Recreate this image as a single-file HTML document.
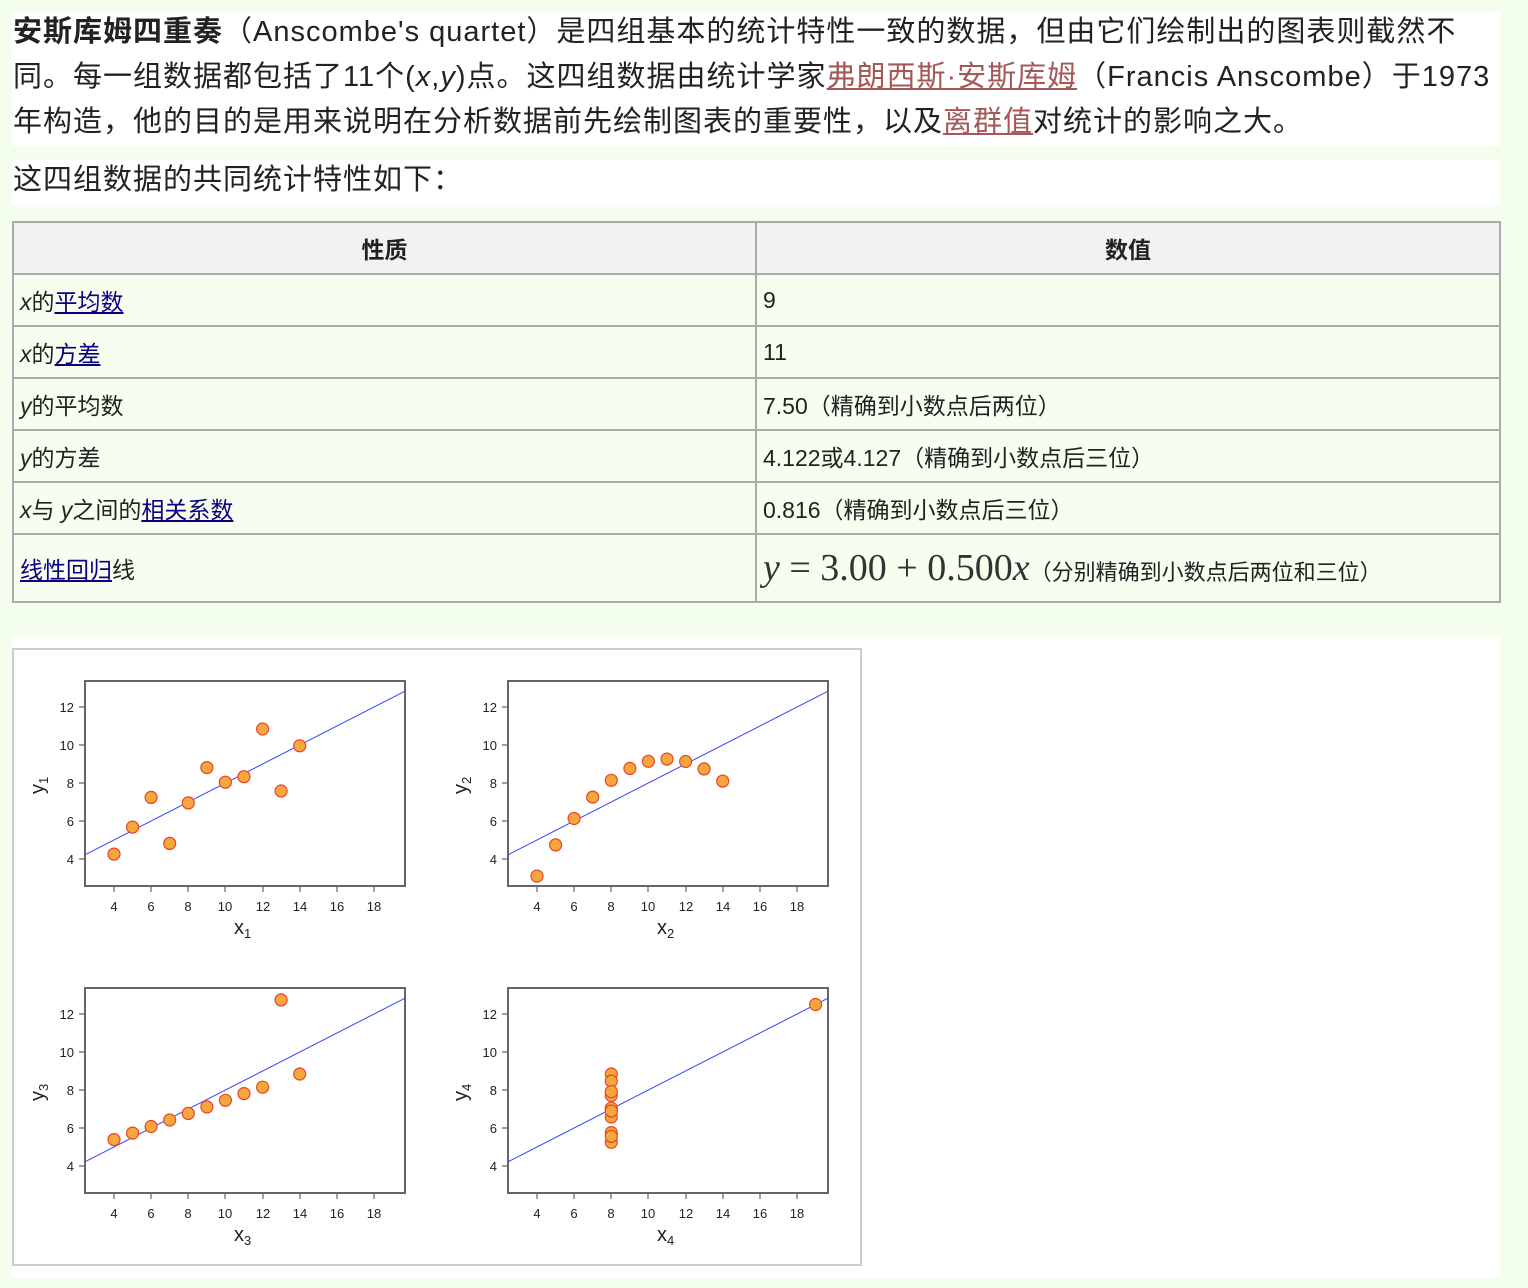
<!DOCTYPE html>
<html><head><meta charset="utf-8">
<style>
html,body{margin:0;padding:0;}
body{width:1528px;height:1288px;background:#f3feed;position:relative;overflow:hidden;font-family:"Liberation Sans","Noto Sans CJK SC",sans-serif;color:#222;}
.box{position:absolute;background:#fff;}
.p1{left:12px;top:12px;width:1488px;height:134px;}
.p1 div{position:absolute;left:1px;font-size:29px;letter-spacing:1px;white-space:nowrap;line-height:45px;}
.p2{left:12px;top:160px;width:1488px;height:45px;}
a.v{color:#a55858;text-decoration:underline;}
a.b{color:#0b0080;text-decoration:underline;}
table{position:absolute;left:12px;top:221px;width:1489px;border-collapse:collapse;background:#f5feef;font-size:23px;}
td,th{border:2px solid #aaa;padding:0 6px;text-align:left;white-space:nowrap;}
th{background:#f2f2f2;text-align:center;font-weight:bold;height:50px;}
td{height:50px;}
.fig{left:12px;top:637px;width:1488px;height:641px;}
.inner{position:absolute;left:12px;top:648px;width:846px;height:614px;border:2px solid #ccc;background:#fff;}
</style></head><body>
<div class="box p1">
<div style="top:-2px">
<b>安斯库姆四重奏</b>（Anscombe's quartet）是四组基本的统计特性一致的数据，但由它们绘制出的图表则截然不</div>
<div style="top:43px">同。每一组数据都包括了11个(<i>x</i>,<i>y</i>)点。这四组数据由统计学家<a class="v">弗朗西斯·安斯库姆</a>（Francis Anscombe）于1973</div>
<div style="top:88px">年构造，他的目的是用来说明在分析数据前先绘制图表的重要性，以及<a class="v">离群值</a>对统计的影响之大。</div>
</div>
<div class="box p2"><div style="position:absolute;left:1px;top:-2px;font-size:29px;letter-spacing:1px;line-height:45px;">这四组数据的共同统计特性如下：</div></div>
<table>
<tr><th style="width:729px">性质</th><th>数值</th></tr>
<tr><td><i>x</i>的<a class="b">平均数</a></td><td>9</td></tr>
<tr><td><i>x</i>的<a class="b">方差</a></td><td>11</td></tr>
<tr><td><i>y</i>的平均数</td><td>7.50（精确到小数点后两位）</td></tr>
<tr><td><i>y</i>的方差</td><td>4.122或4.127（精确到小数点后三位）</td></tr>
<tr><td><i>x</i>与 <i>y</i>之间的<a class="b">相关系数</a></td><td>0.816（精确到小数点后三位）</td></tr>
<tr><td style="height:66px"><a class="b">线性回归</a>线</td><td style="height:66px"><span style="font-family:'Liberation Serif',serif;font-size:38px;color:#333"><i>y</i> = 3.00 + 0.500<i>x</i></span><span style="font-size:22px">（分别精确到小数点后两位和三位）</span></td></tr>
</table>
<div class="box fig"></div>
<div class="inner"></div>
<svg style="position:absolute;left:0;top:0" width="1528" height="1288" font-family="Liberation Sans,sans-serif">
<defs>
<g id="ax">
<rect x="85" y="681" width="320" height="205" fill="none" stroke="#666" stroke-width="2"/>
<g stroke="#666" stroke-width="1.2">
<path d="M79 707H85M79 745H85M79 783H85M79 821H85M79 859H85"/>
<path d="M114 886V892M151 886V892M188 886V892M225 886V892M263 886V892M300 886V892M337 886V892M374 886V892"/>
</g>
<line x1="85" y1="854.8" x2="405" y2="691.2" stroke="#3344ff" stroke-width="1"/>
</g>
</defs>
<use href="#ax"/><use href="#ax" x="423"/><use href="#ax" y="307"/><use href="#ax" x="423" y="307"/>
<g font-size="13" fill="#222" text-anchor="end">
<text x="74" y="712">12</text><text x="74" y="750">10</text><text x="74" y="788">8</text><text x="74" y="826">6</text><text x="74" y="864">4</text>
<text x="497" y="712">12</text><text x="497" y="750">10</text><text x="497" y="788">8</text><text x="497" y="826">6</text><text x="497" y="864">4</text>
<text x="74" y="1019">12</text><text x="74" y="1057">10</text><text x="74" y="1095">8</text><text x="74" y="1133">6</text><text x="74" y="1171">4</text>
<text x="497" y="1019">12</text><text x="497" y="1057">10</text><text x="497" y="1095">8</text><text x="497" y="1133">6</text><text x="497" y="1171">4</text>
</g>
<g font-size="13" fill="#222" text-anchor="middle">
<text x="114" y="911">4</text><text x="151" y="911">6</text><text x="188" y="911">8</text><text x="225" y="911">10</text><text x="263" y="911">12</text><text x="300" y="911">14</text><text x="337" y="911">16</text><text x="374" y="911">18</text>
<text x="537" y="911">4</text><text x="574" y="911">6</text><text x="611" y="911">8</text><text x="648" y="911">10</text><text x="686" y="911">12</text><text x="723" y="911">14</text><text x="760" y="911">16</text><text x="797" y="911">18</text>
<text x="114" y="1218">4</text><text x="151" y="1218">6</text><text x="188" y="1218">8</text><text x="225" y="1218">10</text><text x="263" y="1218">12</text><text x="300" y="1218">14</text><text x="337" y="1218">16</text><text x="374" y="1218">18</text>
<text x="537" y="1218">4</text><text x="574" y="1218">6</text><text x="611" y="1218">8</text><text x="648" y="1218">10</text><text x="686" y="1218">12</text><text x="723" y="1218">14</text><text x="760" y="1218">16</text><text x="797" y="1218">18</text>
</g>
<g font-size="20" fill="#222">
<text x="234" y="934">x<tspan font-size="13" dy="4">1</tspan></text>
<text x="657" y="934">x<tspan font-size="13" dy="4">2</tspan></text>
<text x="234" y="1241">x<tspan font-size="13" dy="4">3</tspan></text>
<text x="657" y="1241">x<tspan font-size="13" dy="4">4</tspan></text>
<text transform="translate(44,794) rotate(-90)">y<tspan font-size="13" dy="4">1</tspan></text>
<text transform="translate(467,794) rotate(-90)">y<tspan font-size="13" dy="4">2</tspan></text>
<text transform="translate(44,1101) rotate(-90)">y<tspan font-size="13" dy="4">3</tspan></text>
<text transform="translate(467,1101) rotate(-90)">y<tspan font-size="13" dy="4">4</tspan></text>
</g>
<g fill="#f5a63c" stroke="#e8452a" stroke-width="1.2">
<circle cx="225.4" cy="782.2" r="6"/><circle cx="188.3" cy="802.9" r="6"/><circle cx="281.1" cy="791" r="6"/><circle cx="206.9" cy="767.6" r="6"/><circle cx="244" cy="776.7" r="6"/><circle cx="299.7" cy="745.8" r="6"/><circle cx="151.1" cy="797.4" r="6"/><circle cx="114" cy="854.1" r="6"/><circle cx="262.6" cy="729" r="6"/><circle cx="169.7" cy="843.4" r="6"/><circle cx="132.6" cy="827.1" r="6"/>
<g transform="translate(423,0)">
<circle cx="225.4" cy="761.3" r="6"/><circle cx="188.3" cy="780.3" r="6"/><circle cx="281.1" cy="768.9" r="6"/><circle cx="206.9" cy="768.4" r="6"/><circle cx="244" cy="759.1" r="6"/><circle cx="299.7" cy="781.1" r="6"/><circle cx="151.1" cy="818.5" r="6"/><circle cx="114" cy="876.1" r="6"/><circle cx="262.6" cy="761.5" r="6"/><circle cx="169.7" cy="797.1" r="6"/><circle cx="132.6" cy="844.9" r="6"/>
</g>
<g transform="translate(0,307)">
<circle cx="225.4" cy="793.3" r="6"/><circle cx="188.3" cy="806.4" r="6"/><circle cx="281.1" cy="692.9" r="6"/><circle cx="206.9" cy="799.9" r="6"/><circle cx="244" cy="786.6" r="6"/><circle cx="299.7" cy="767" r="6"/><circle cx="151.1" cy="819.5" r="6"/><circle cx="114" cy="832.6" r="6"/><circle cx="262.6" cy="780.2" r="6"/><circle cx="169.7" cy="813" r="6"/><circle cx="132.6" cy="826.1" r="6"/>
</g>
<g transform="translate(423,307)">
<circle cx="188.3" cy="810" r="6"/><circle cx="188.3" cy="825.6" r="6"/><circle cx="188.3" cy="788.5" r="6"/><circle cx="188.3" cy="767" r="6"/><circle cx="188.3" cy="774.1" r="6"/><circle cx="188.3" cy="801.2" r="6"/><circle cx="188.3" cy="835.3" r="6"/><circle cx="392.6" cy="697.5" r="6"/><circle cx="188.3" cy="829.4" r="6"/><circle cx="188.3" cy="784.7" r="6"/><circle cx="188.3" cy="804.1" r="6"/>
</g>
</g>
</svg>
</body></html>
